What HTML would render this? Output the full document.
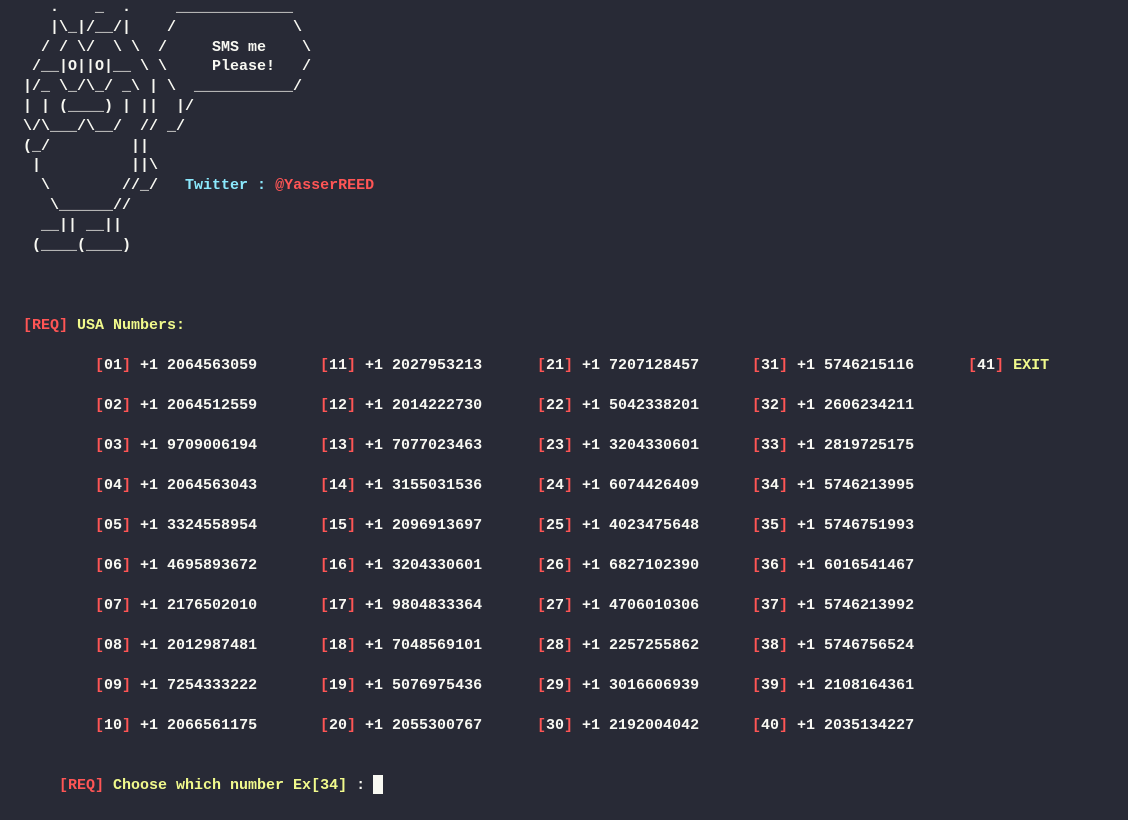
<!DOCTYPE html>
<html><head><meta charset="utf-8"><style>
html,body{margin:0;padding:0;background:#282a36;width:1128px;height:820px;overflow:hidden}
*{font-family:"Liberation Mono","DejaVu Sans Mono",monospace;font-weight:bold;font-size:15px}
pre{margin:0;position:absolute;left:23px;top:-2px;line-height:19.8px;color:#f8f8f2}
.t{position:absolute;white-space:pre;line-height:20px;color:#f8f8f2}
.r{color:#ff5555}.y{color:#f1fa8c}.c{color:#8be9fd}
.cur{position:absolute;left:373px;top:775px;width:10px;height:19px;background:#f8f8f2}
</style></head><body>
<pre>   .    _  .     _____________
   |\_|/__/|    /             \
  / / \/  \ \  /     SMS me    \
 /__|O||O|__ \ \     Please!   /
|/_ \_/\_/ _\ | \  ___________/
| | (____) | ||  |/
\/\___/\__/  // _/
(_/         ||
 |          ||\
  \        //_/   <span class="c">Twitter :</span> <span class="r">@YasserREED</span>
   \______//
  __|| __||
 (____(____)</pre>
<div class="t" style="left:23px;top:316px"><span class="r">[REQ]</span> <span class="y">USA Numbers:</span></div>
<div id="g"></div>
<div class="t" style="left:59px;top:776px"><span class="r">[REQ]</span> <span class="y">Choose which number Ex[34]</span> :</div>
<div class="cur"></div>
<script>
var nums=["2064563059","2064512559","9709006194","2064563043","3324558954","4695893672","2176502010","2012987481","7254333222","2066561175",
"2027953213","2014222730","7077023463","3155031536","2096913697","3204330601","9804833364","7048569101","5076975436","2055300767",
"7207128457","5042338201","3204330601","6074426409","4023475648","6827102390","4706010306","2257255862","3016606939","2192004042",
"5746215116","2606234211","2819725175","5746213995","5746751993","6016541467","5746213992","5746756524","2108164361","2035134227"];
var xs=[95,320,537,752,968],h="";
for(var i=0;i<40;i++){var c=Math.floor(i/10),r=i%10,n=(i+1<10?"0":"")+(i+1);
h+='<div class="t" style="left:'+xs[c]+'px;top:'+(356+r*40)+'px"><span class="r">[</span>'+n+'<span class="r">]</span> +1 '+nums[i]+'</div>';}
h+='<div class="t" style="left:968px;top:356px"><span class="r">[</span>41<span class="r">]</span> <span class="y">EXIT</span></div>';
document.getElementById("g").innerHTML=h;
</script>
</body></html>
